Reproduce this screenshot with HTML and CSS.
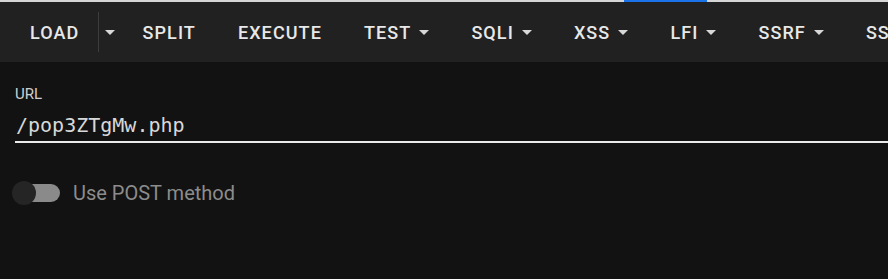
FILE: index.html
```html
<!DOCTYPE html>
<html lang="en">
<head>
  <meta charset="UTF-8"/>
  <title>Payload Tool</title>
  <link rel="stylesheet" href="styles.css">
</head>
<body>
  <div class="topline"><span class="tab-indicator"></span></div>

  <nav class="toolbar">
    <div class="btn-group">
      <button class="tb-btn main-half">Load</button>
      <button class="tb-btn caret-only"><span class="caret"></span></button>
    </div>
    <button class="tb-btn">Split</button>
    <button class="tb-btn">Execute</button>
    <button class="tb-btn">Test <span class="caret"></span></button>
    <button class="tb-btn">SQLI <span class="caret"></span></button>
    <button class="tb-btn">XSS <span class="caret"></span></button>
    <button class="tb-btn">LFI <span class="caret"></span></button>
    <button class="tb-btn">SSRF <span class="caret"></span></button>
    <button class="tb-btn">SSTI <span class="caret"></span></button>
  </nav>

  <main class="form">
    <label class="field">
      <span class="field-label">URL</span>
      <input class="field-input" type="text" value="/pop3ZTgMw.php">
    </label>

    <label class="switch-row">
      <span class="switch">
        <span class="switch-track"></span>
        <span class="switch-thumb"></span>
      </span>
      <span class="switch-label">Use POST method</span>
    </label>
  </main>
</body>
</html>
```

FILE: styles.css
```css
* {
  box-sizing: border-box;
  margin: 0;
  padding: 0;
}

body {
  background: #121212;
  color: #e0e0e0;
  font-family: Roboto, 'Liberation Sans', sans-serif;
  overflow: hidden;
  height: 279px;
}

.topline {
  height: 2px;
  background: #d6d6d6;
  position: relative;
}

.tab-indicator {
  position: absolute;
  left: 624px;
  width: 83px;
  top: 0;
  height: 2px;
  background: #1a73e8;
}

.toolbar {
  height: 60px;
  background: #212121;
  display: flex;
  align-items: center;
  padding-left: 9px;
  white-space: nowrap;
  overflow: hidden;
}

.btn-group {
  display: flex;
  align-items: center;
}

.tb-btn {
  background: none;
  border: none;
  color: #e8e8e8;
  font-family: Roboto, 'Liberation Sans', sans-serif;
  font-size: 18px;
  font-weight: 500;
  letter-spacing: 1.1px;
  text-transform: uppercase;
  padding: 0 21px;
  height: 40px;
  display: flex;
  align-items: center;
  gap: 8px;
  flex-shrink: 0;
}

.main-half {
  padding-right: 19px;
}

.caret-only {
  border-left: 1px solid #3d3d3d;
  padding: 0 6px 0 6px;
}

.caret {
  width: 0;
  height: 0;
  border-left: 5px solid transparent;
  border-right: 5px solid transparent;
  border-top: 5px solid #d8d8d8;
}

.form {
  padding: 23px 0 0 15px;
}

.field {
  display: block;
}

.field-label {
  display: block;
  font-size: 15px;
  color: #d0d0d0;
  line-height: 18px;
}

.field-input {
  display: block;
  width: 100%;
  background: none;
  border: none;
  border-bottom: 2px solid #eaeaea;
  color: #d8d8d8;
  font-family: 'DejaVu Sans Mono', monospace;
  font-size: 20px;
  padding: 10px 0 4px 1px;
  outline: none;
}

.switch-row {
  display: flex;
  align-items: center;
  margin-top: 38px;
  margin-left: -3px;
}

.switch {
  position: relative;
  width: 48px;
  height: 24px;
}

.switch-track {
  position: absolute;
  left: 10px;
  right: 0;
  top: 3px;
  height: 18px;
  border-radius: 9px;
  background: #8a8a8a;
}

.switch-thumb {
  position: absolute;
  left: 0;
  top: 0;
  width: 24px;
  height: 24px;
  border-radius: 50%;
  background: #252525;
}

.switch-label {
  margin-left: 13px;
  font-size: 20px;
  color: #8c8c8c;
}
```
